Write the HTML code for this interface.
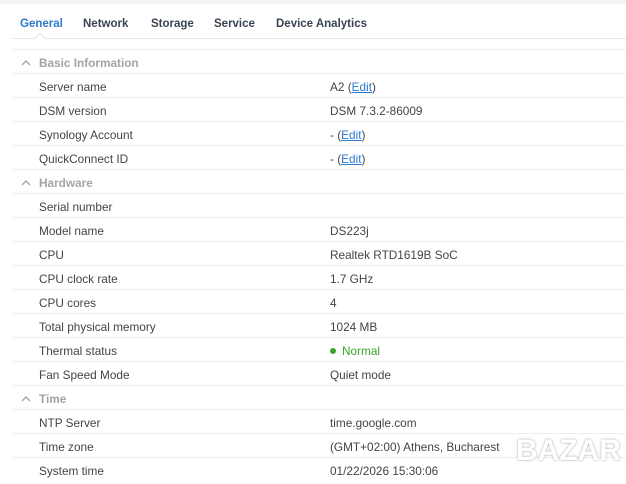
<html><head><style>
body{margin:0;width:626px;height:480px;overflow:hidden;background:#fff;font-family:"Liberation Sans",sans-serif;font-size:11.8px;color:#444;position:relative}
.top{position:absolute;left:0;top:0;width:626px;height:4px;background:#f2f3f5}
.tab{position:absolute;top:18px;font-weight:bold;font-size:11.5px;color:#3a4450}
.tabline{position:absolute;left:12px;right:0;top:38px;border-top:1px solid #e3e6ea}
.notch{position:absolute;left:36px;top:34px;width:7px;height:7px;background:#fff;border-left:1px solid #e3e6ea;border-top:1px solid #e3e6ea;transform:rotate(45deg)}
.row{position:absolute;left:12px;right:0;height:24px;border-top:1px solid #eceef1;box-sizing:border-box;line-height:26px}
.l{position:absolute;left:27px}
.v{position:absolute;left:318px}
.h{color:#a0a5ab;font-weight:bold}
.h svg{position:absolute;left:9px;top:9px}
a{color:#2a7ad0;text-decoration:underline}
.dot{display:inline-block;width:6px;height:6px;border-radius:50%;background:#3aa52a;margin-right:6px;vertical-align:1px}
</style></head><body>
<div class="top"></div>
<div class="tab" style="left:20px;color:#2a7ad0">General</div>
<div class="tab" style="left:83px">Network</div>
<div class="tab" style="left:151px">Storage</div>
<div class="tab" style="left:214px">Service</div>
<div class="tab" style="left:276px">Device Analytics</div>
<div class="tabline"></div><div class="notch"></div>
<div class="row h" style="top:49px"><svg width="10" height="7"><path d="M1 6L5 2L9 6" stroke="#a0a5ab" stroke-width="1.4" fill="none"/></svg><span class="l">Basic Information</span></div>
<div class="row" style="top:73px"><span class="l">Server name</span><span class="v">A2 (<a>Edit</a>)</span></div>
<div class="row" style="top:97px"><span class="l">DSM version</span><span class="v">DSM 7.3.2-86009</span></div>
<div class="row" style="top:121px"><span class="l">Synology Account</span><span class="v">- (<a>Edit</a>)</span></div>
<div class="row" style="top:145px"><span class="l">QuickConnect ID</span><span class="v">- (<a>Edit</a>)</span></div>
<div class="row h" style="top:169px"><svg width="10" height="7"><path d="M1 6L5 2L9 6" stroke="#a0a5ab" stroke-width="1.4" fill="none"/></svg><span class="l">Hardware</span></div>
<div class="row" style="top:193px"><span class="l">Serial number</span><span class="v"></span></div>
<div class="row" style="top:217px"><span class="l">Model name</span><span class="v">DS223j</span></div>
<div class="row" style="top:241px"><span class="l">CPU</span><span class="v">Realtek RTD1619B SoC</span></div>
<div class="row" style="top:265px"><span class="l">CPU clock rate</span><span class="v">1.7 GHz</span></div>
<div class="row" style="top:289px"><span class="l">CPU cores</span><span class="v">4</span></div>
<div class="row" style="top:313px"><span class="l">Total physical memory</span><span class="v">1024 MB</span></div>
<div class="row" style="top:337px"><span class="l">Thermal status</span><span class="v" style="color:#3aa52a"><span class="dot"></span>Normal</span></div>
<div class="row" style="top:361px"><span class="l">Fan Speed Mode</span><span class="v">Quiet mode</span></div>
<div class="row h" style="top:385px"><svg width="10" height="7"><path d="M1 6L5 2L9 6" stroke="#a0a5ab" stroke-width="1.4" fill="none"/></svg><span class="l">Time</span></div>
<div class="row" style="top:409px"><span class="l">NTP Server</span><span class="v">time.google.com</span></div>
<div class="row" style="top:433px"><span class="l">Time zone</span><span class="v">(GMT+02:00) Athens, Bucharest</span></div>
<div class="row" style="top:457px"><span class="l">System time</span><span class="v">01/22/2026 15:30:06</span></div>
<div style="position:absolute;left:516px;top:434px;font-size:30px;font-weight:bold;color:#fff;text-shadow:0 0 2px #999;letter-spacing:0px">BAZAR</div>
</body></html>
